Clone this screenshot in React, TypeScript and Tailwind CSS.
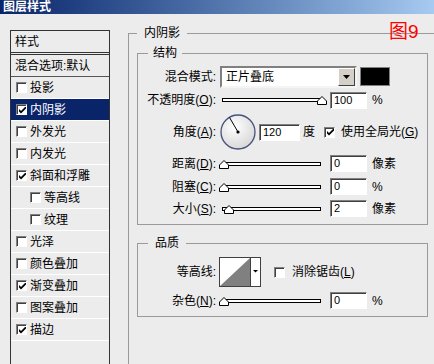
import React from 'react';

type Item = { label: string; checked?: boolean; active?: boolean; indent?: boolean };

const items: Item[] = [
  { label: '投影' },
  { label: '内阴影', checked: true, active: true },
  { label: '外发光' },
  { label: '内发光' },
  { label: '斜面和浮雕', checked: true },
  { label: '等高线', indent: true },
  { label: '纹理', indent: true },
  { label: '光泽' },
  { label: '颜色叠加' },
  { label: '渐变叠加', checked: true },
  { label: '图案叠加' },
  { label: '描边', checked: true },
];

const Check: React.FC<{ checked?: boolean }> = ({ checked }) => (
  <span className="flex h-[11px] w-[11px] shrink-0 items-center justify-center border border-[#808080] border-b-white border-r-white bg-white shadow-[inset_1px_1px_0_#404040]">
    {checked && (
      <svg width="7" height="7" viewBox="0 0 7 7" className="ml-[1px] mt-[1px]">
        <path d="M0 2 L2 4 L7 -1 V1.5 L2 6.5 L0 4.5 Z" fill="#000" />
      </svg>
    )}
  </span>
);

const Field: React.FC<{ value: string; w?: string }> = ({ value, w = 'w-[37px]' }) => (
  <div
    className={`${w} h-[17px] shrink-0 border border-[#808080] border-b-white border-r-white bg-white pl-[3px] text-[11px] leading-[15px] shadow-[inset_1px_1px_0_#404040]`}
  >
    {value}
  </div>
);

const Slider: React.FC<{ pos: number }> = ({ pos }) => (
  <div className="relative ml-[3px] h-[10px] w-[104px] shrink-0">
    <div className="absolute left-[3px] right-[2px] top-[3px] h-[4px] border border-black bg-white" />
    <svg className="absolute top-[1px]" style={{ left: pos }} width="10" height="9" viewBox="0 0 10 9">
      <path d="M0.5 8.5 V5 L5 0.5 L9.5 5 V8.5 Z" fill="#fff" stroke="#000" />
    </svg>
  </div>
);

const U: React.FC<{ c: string }> = ({ c }) => <span className="underline underline-offset-[1px]">{c}</span>;

const Row: React.FC<{ label: React.ReactNode; className: string; children: React.ReactNode }> = ({ label, className, children }) => (
  <div className={`flex items-center ${className}`}>
    <span className="w-[78px] shrink-0 whitespace-nowrap text-right">{label}</span>
    {children}
  </div>
);

const StyleList = () => (
  <div className="ml-[10px] mt-[16px] h-[340px] w-[100px] shrink-0 border border-[#333]">
    <div className="flex h-[24px] items-center border-b-[3px] border-double border-[#333] pl-[4px]">样式</div>
    <div className="flex h-[22px] items-center border-b border-[#555] pl-[4px] whitespace-nowrap">混合选项:默认</div>
    {items.map((it) => (
      <div
        key={it.label}
        className={`flex h-[22px] items-center gap-[3px] border-b border-white ${it.indent ? 'pl-[19px]' : 'pl-[5px]'} ${
          it.active ? 'bg-[#0a246a] text-white' : ''
        }`}
      >
        <Check checked={it.checked} />
        <span className="whitespace-nowrap">{it.label}</span>
      </div>
    ))}
  </div>
);

export default function App() {
  return (
    <div className="relative flex h-[364px] w-[434px] flex-col overflow-hidden bg-[#ececec] font-['Liberation_Sans','Noto_Sans_CJK_SC',sans-serif] text-[12px] leading-[14px] text-black">
      <div className="h-[14px] shrink-0 bg-gradient-to-r from-[#0a246a] to-[#a6caf0] pl-[3px] text-[12px] font-bold leading-[14px] text-white">
        图层样式
      </div>
      <div className="flex flex-1 items-start">
        <StyleList />
        <fieldset className="ml-[18px] mt-[12px] h-[400px] w-[320px] min-w-0 shrink-0 border border-[#9a9a9a]">
          <legend className="ml-[8px] px-[7px]">内阴影</legend>

          <fieldset className="ml-[8px] mt-[6px] w-[291px] border border-[#9a9a9a] pb-[7px]">
            <legend className="ml-[10px] px-[5px]">结构</legend>

            <div className="mt-[6px] flex h-[22px] items-start">
              <span className="flex h-[22px] w-[78px] shrink-0 items-center justify-end">混合模式:</span>
              <div className="ml-[4px] flex h-[22px] w-[137px] shrink-0 items-stretch border-2 border-[#808080] border-b-[#f4f4f4] border-r-[#f4f4f4] bg-white">
                <span className="flex flex-1 items-center pl-[4px]">正片叠底</span>
                <span className="flex w-[17px] items-center justify-center border border-white border-b-[#404040] border-r-[#404040] bg-[#d4d0c8]">
                  <svg width="7" height="4" viewBox="0 0 7 4">
                    <path d="M0 0 H7 L3.5 4 Z" fill="#000" />
                  </svg>
                </span>
              </div>
              <div className="ml-[3px] mt-[1px] h-[19px] w-[30px] border border-[#808080] bg-black" />
            </div>

            <Row className="mt-[3px] h-[18px]" label={<>不透明度(<U c="O" />):</>}>
              <Slider pos={98} />
              <div className="ml-[7px]">
                <Field value="100" />
              </div>
              <span className="ml-[5px]">%</span>
            </Row>

            <Row className="mt-[5px] h-[36px]" label={<>角度(<U c="A" />):</>}>
              <svg className="ml-[4px] shrink-0" width="36" height="36" viewBox="0 0 36 36">
                <defs>
                  <radialGradient id="dial" cx="40%" cy="35%" r="70%">
                    <stop offset="0" stopColor="#ffffff" />
                    <stop offset="1" stopColor="#d6d6d6" />
                  </radialGradient>
                </defs>
                <circle cx="18" cy="18" r="17" fill="url(#dial)" stroke="#45527a" strokeWidth="1.3" />
                <line x1="18" y1="18" x2="9.5" y2="3.5" stroke="#000" strokeWidth="1" />
                <circle cx="18" cy="18" r="1.6" fill="#000" />
              </svg>
              <div className="ml-[3px]">
                <Field value="120" w="w-[41px]" />
              </div>
              <span className="ml-[3px]">度</span>
              <span className="ml-[9px]">
                <Check checked />
              </span>
              <span className="ml-[6px] whitespace-nowrap">
                使用全局光(<U c="G" />)
              </span>
            </Row>

            <Row className="mt-[5px] h-[17px]" label={<>距离(<U c="D" />):</>}>
              <Slider pos={0} />
              <div className="ml-[7px]">
                <Field value="0" />
              </div>
              <span className="ml-[5px]">像素</span>
            </Row>

            <Row className="mt-[6px] h-[17px]" label={<>阻塞(<U c="C" />):</>}>
              <Slider pos={0} />
              <div className="ml-[7px]">
                <Field value="0" />
              </div>
              <span className="ml-[5px]">%</span>
            </Row>

            <Row className="mt-[5px] h-[17px]" label={<>大小(<U c="S" />):</>}>
              <Slider pos={5} />
              <div className="ml-[7px]">
                <Field value="2" />
              </div>
              <span className="ml-[5px]">像素</span>
            </Row>
          </fieldset>

          <fieldset className="ml-[8px] mt-[11px] w-[291px] border border-[#9a9a9a] pb-[7px]">
            <legend className="ml-[10px] px-[7px]">品质</legend>

            <Row className="mt-[7px] h-[30px]" label="等高线:">
              <div className="ml-[3px] h-[30px] w-[42px] shrink-0 border border-[#404040] bg-white">
                <svg width="40" height="28" viewBox="0 0 40 28">
                  <polygon points="0,28 30,28 30,0" fill="#808080" />
                  <line x1="30.5" y1="0" x2="30.5" y2="28" stroke="#404040" />
                  <path d="M33 12 H38 L35.5 14.5 Z" fill="#000" />
                </svg>
              </div>
              <span className="ml-[13px]">
                <Check />
              </span>
              <span className="ml-[7px] whitespace-nowrap">
                消除锯齿(<U c="L" />)
              </span>
            </Row>

            <Row className="mt-[5px] h-[17px]" label={<>杂色(<U c="N" />):</>}>
              <Slider pos={0} />
              <div className="ml-[7px]">
                <Field value="0" />
              </div>
              <span className="ml-[5px]">%</span>
            </Row>
          </fieldset>
        </fieldset>
      </div>
      <div className="absolute left-[389px] top-[22px] text-[19px] leading-[20px] text-[#ff0000]">图9</div>
    </div>
  );
}
